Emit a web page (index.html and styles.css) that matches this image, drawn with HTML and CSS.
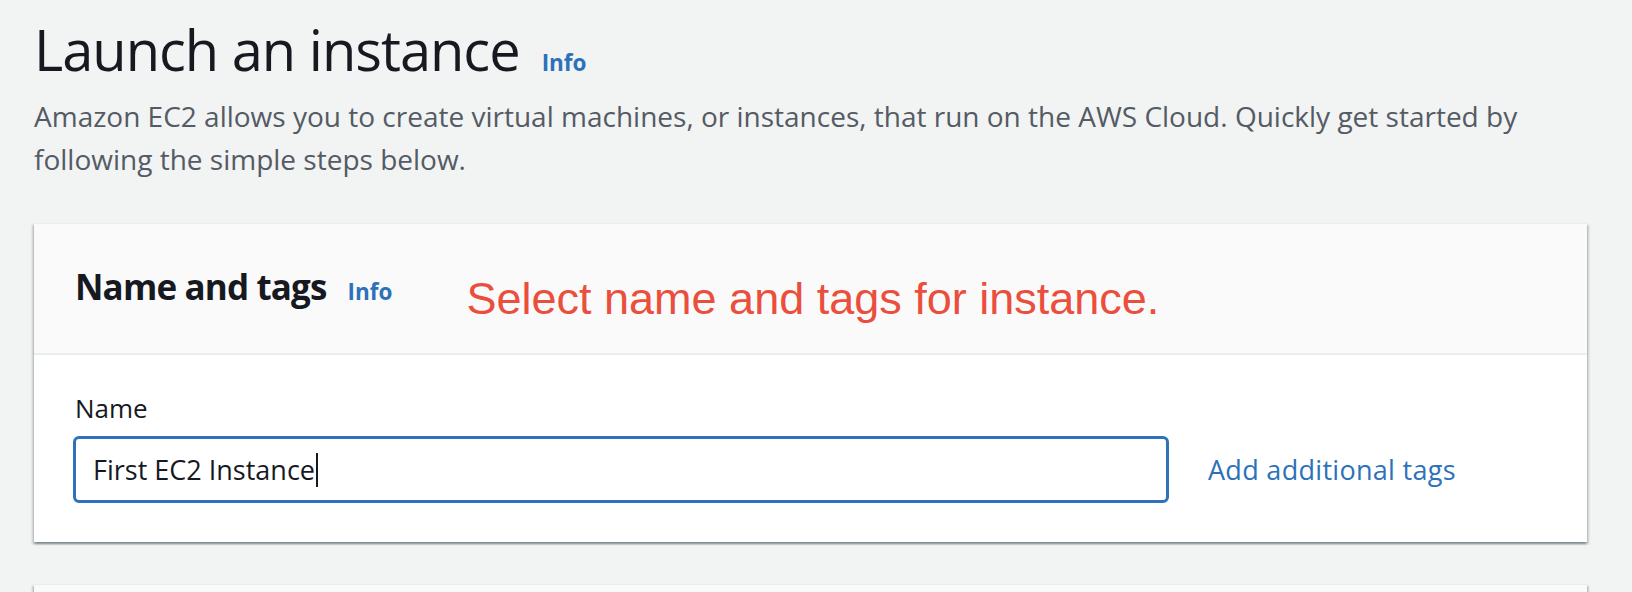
FILE: index.html
```html
<!DOCTYPE html>
<html lang="en">
<head>
<meta charset="utf-8">
<title>Launch an instance</title>
<link rel="stylesheet" href="styles.css">
</head>
<body>
<main class="page">
  <header class="page-head">
    <div class="title-row">
      <h1 class="page-title">Launch an instance</h1>
      <a class="info-link" href="#">Info</a>
    </div>
    <p class="page-desc">Amazon EC2 allows you to create virtual machines, or instances, that run on the AWS Cloud. Quickly get started by following the simple steps below.</p>
  </header>

  <section class="card">
    <div class="card-head">
      <div class="card-title-group">
        <h2 class="card-title">Name and tags</h2>
        <a class="info-link" href="#">Info</a>
      </div>
      <span class="annotation">Select name and tags for instance.</span>
    </div>
    <div class="card-body">
      <label class="field-label">Name</label>
      <div class="field-row">
        <div class="text-input"><span class="input-value">First EC2 Instance</span><span class="caret"></span></div>
        <a class="tag-link" href="#">Add additional tags</a>
      </div>
    </div>
  </section>

  <section class="card card-next">
    <div class="card-head card-head-next"></div>
  </section>
</main>
</body>
</html>
```

FILE: styles.css
```css
html, body {
  margin: 0;
  padding: 0;
  overflow: hidden;
  height: 592px;
}
body {
  background: #f2f3f3;
  font-family: "Open Sans", "Noto Sans", sans-serif;
  color: #16191f;
}
.page {
  padding: 13px 45px 0 34px;
}
.title-row {
  display: flex;
  align-items: baseline;
  gap: 22px;
}
.page-title {
  margin: 0;
  font-size: 56px;
  line-height: 72px;
  font-weight: 400;
  letter-spacing: -1px;
  color: #16191f;
}
.info-link {
  font-size: 22.5px;
  font-weight: 700;
  color: #2d72b8;
  text-decoration: none;
  line-height: 30px;
}
.page-desc {
  margin: 10px 0 0;
  font-size: 28px;
  line-height: 43px;
  color: #545b64;
}
.card {
  margin-top: 42px;
  background: #fff;
  border-top: 1px solid #eaeded;
  box-shadow: 0 2px 2px rgba(0, 28, 36, 0.3), 2px 2px 2px rgba(0, 28, 36, 0.15), -2px 2px 2px rgba(0, 28, 36, 0.15);
}
.card-head {
  background: #fafafa;
  border-bottom: 2px solid #eaeded;
  padding: 39px 41px 0;
  height: 90px;
  display: flex;
  align-items: flex-start;
}
.card-title-group {
  display: flex;
  align-items: baseline;
  gap: 21px;
}
.card-title {
  margin: 0;
  font-size: 35px;
  line-height: 48px;
  font-weight: 700;
  letter-spacing: -0.85px;
}
.annotation {
  margin-left: 74px;
  margin-top: 10px;
  font-family: "Liberation Sans", Arial, sans-serif;
  font-size: 45px;
  line-height: 52px;
  color: #ea4f3d;
}
.card-body {
  padding: 35px 41px 39px 39px;
}
.field-label {
  display: block;
  margin-left: 2px;
  font-size: 26px;
  line-height: 36px;
  color: #16191f;
}
.field-row {
  margin-top: 10px;
  display: flex;
  align-items: center;
  gap: 39px;
}
.text-input {
  width: 1096px;
  box-sizing: border-box;
  height: 67px;
  border: 3px solid #2f72b9;
  border-radius: 6px;
  padding: 0 17px;
  display: flex;
  align-items: center;
  background: #fff;
}
.input-value {
  font-size: 27px;
  line-height: 36px;
  color: #16191f;
}
.caret {
  display: inline-block;
  width: 2px;
  height: 34px;
  background: #16191f;
  margin-left: 1px;
}
.tag-link {
  font-size: 27px;
  line-height: 36px;
  letter-spacing: 0.3px;
  color: #2d72b8;
  text-decoration: none;
}
.card-next {
  margin-top: 42px;
  height: 60px;
}
.card-head-next {
  height: 60px;
  padding: 0;
  border-bottom: none;
}
```
